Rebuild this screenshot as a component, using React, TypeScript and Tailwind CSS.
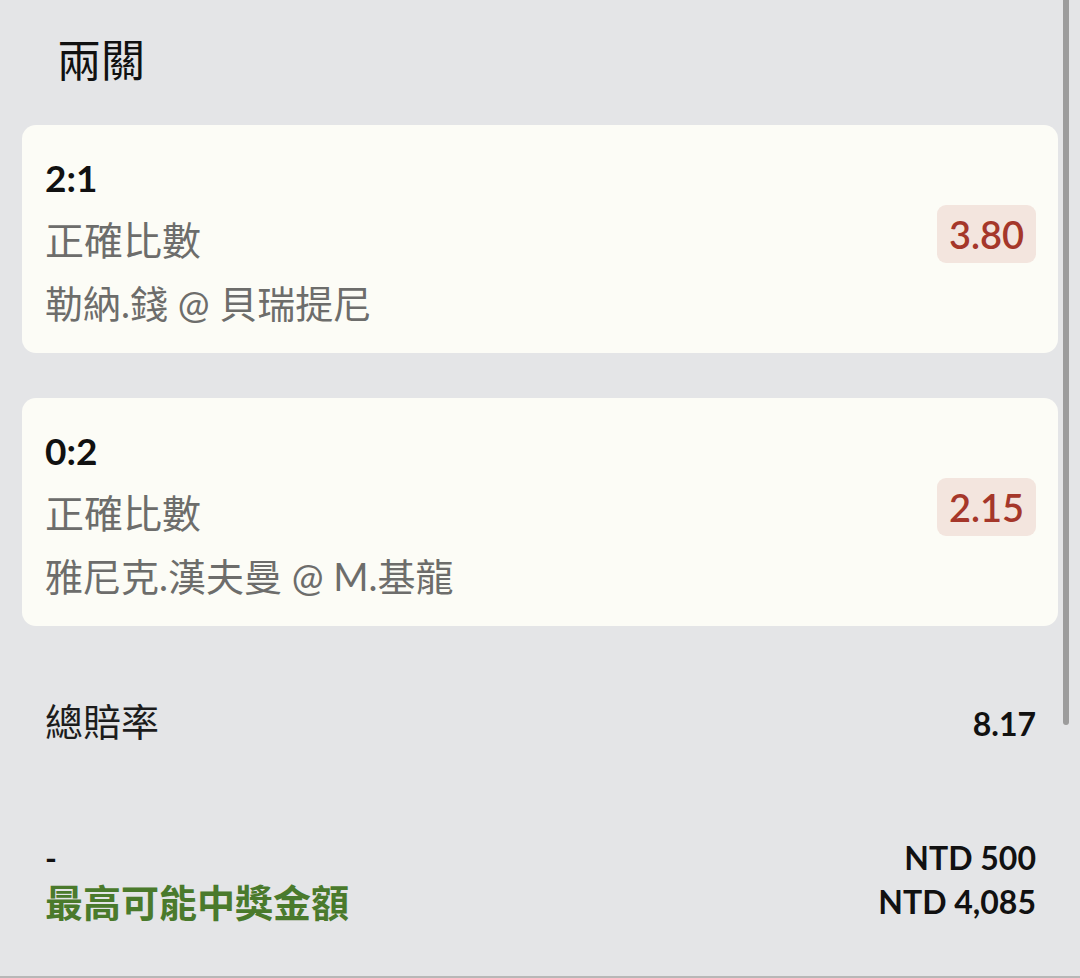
import React from "react";

interface Selection {
  score: string;
  market: string;
  match: string;
  odds: string;
}

const selections: Selection[] = [
  { score: "2:1", market: "正確比數", match: "勒納.錢 @ 貝瑞提尼", odds: "3.80" },
  { score: "0:2", market: "正確比數", match: "雅尼克.漢夫曼 @ M.基龍", odds: "2.15" },
];

const SelectionCard = ({ item }: { item: Selection }) => (
  <div className="flex justify-between rounded-[14px] bg-[#fcfcf6] pl-[23px] pr-[22px] pt-[21px] pb-[18px]">
    <div>
      <p className="text-[37px] leading-[63px] font-bold text-[#111111]">{item.score}</p>
      <p className="text-[39px] leading-[63px] text-[#6d6d6b]">{item.market}</p>
      <p className="text-[38px] leading-[63px] text-[#6d6d6b]">{item.match}</p>
    </div>
    <div className="mt-[59px] self-start rounded-[9px] bg-[#f3e5de] px-[12px] h-[58px] flex items-center">
      <span className="text-[38px] font-semibold text-[#a5372a]">{item.odds}</span>
    </div>
  </div>
);

export default function App() {
  return (
    <div className="relative h-[978px] w-[1080px] overflow-hidden border-b-2 border-[#b7b7b7] bg-[#e4e5e7] font-['Lato','Noto_Sans_CJK_TC',sans-serif]">
      {/* Scrollbar */}
      <div className="absolute right-[11px] top-0 h-[725px] w-[6px] rounded-b-full bg-[#9c9c9c]" />

      <div className="px-[22px]">
        {/* Título */}
        <h1 className="pl-[35px] pt-[38px] text-[44px] leading-[44px] font-normal text-[#111111]">兩關</h1>

        {/* Selecciones */}
        <div className="mt-[43px] flex flex-col gap-[45px]">
          {selections.map(s => (
            <SelectionCard key={s.score} item={s} />
          ))}
        </div>

        {/* Resumen */}
        <div className="mt-[64px] flex items-baseline justify-between pl-[23px] pr-[22px]">
          <span className="text-[38px] leading-[63px] text-[#1c1c1c]">總賠率</span>
          <span className="text-[32px] font-bold text-[#111111]">8.17</span>
        </div>

        <div className="mt-[83px] pl-[23px] pr-[22px]">
          <div className="flex items-baseline justify-between text-[32px] leading-[44px] font-bold text-[#111111]">
            <span>-</span>
            <span>NTD 500</span>
          </div>
          <div className="flex items-center justify-between h-[44px]">
            <span className="text-[38px] leading-[44px] font-bold text-[#4a7a2c]">最高可能中獎金額</span>
            <span className="text-[32px] leading-[44px] font-bold text-[#111111]">NTD 4,085</span>
          </div>
        </div>
      </div>
    </div>
  );
}
